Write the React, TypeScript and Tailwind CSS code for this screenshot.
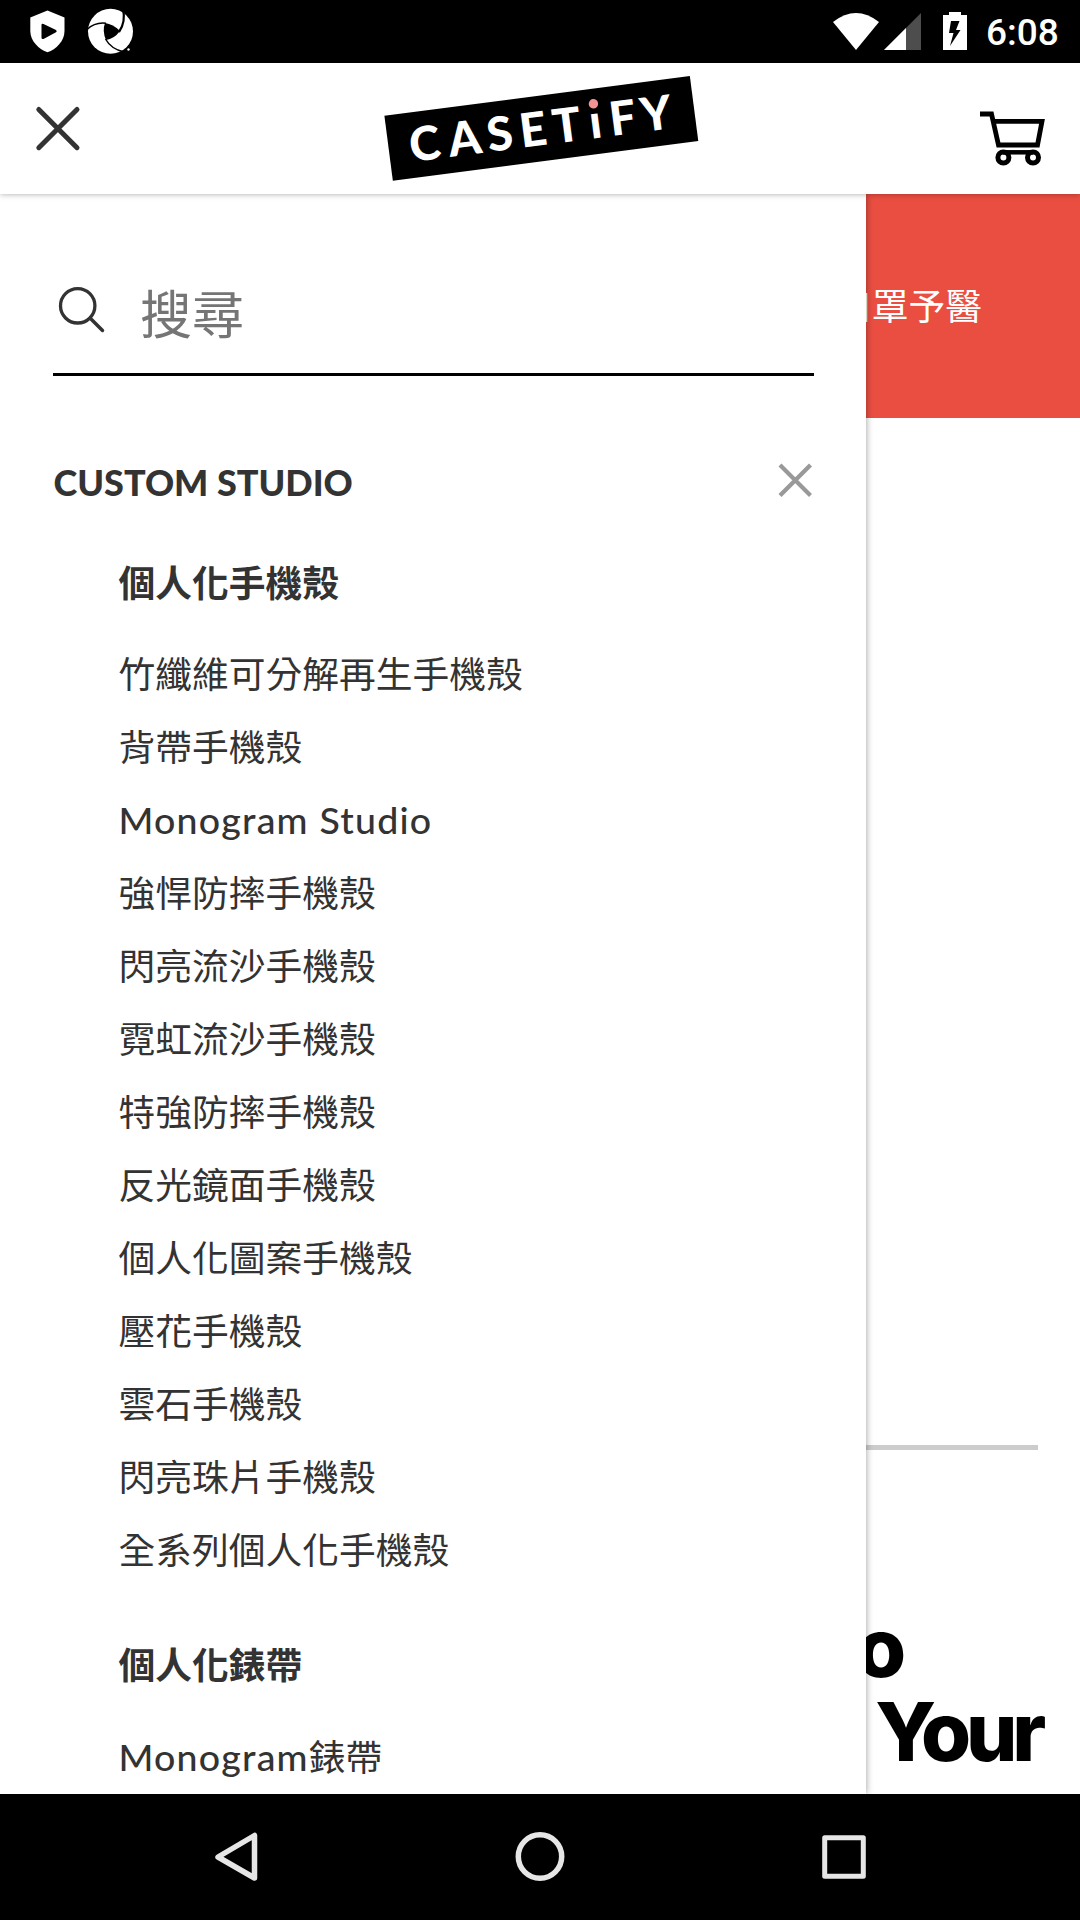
const cases = [
  '竹纖維可分解再生手機殼', '背帶手機殼', 'Monogram Studio', '強悍防摔手機殼', '閃亮流沙手機殼',
  '霓虹流沙手機殼', '特強防摔手機殼', '反光鏡面手機殼', '個人化圖案手機殼', '壓花手機殼',
  '雲石手機殼', '閃亮珠片手機殼', '全系列個人化手機殼',
];

function MenuLink({ label }: { label: string }) {
  const m = label.match(/^([A-Za-z ]*)(.*)$/)!;
  return (
    <li className="h-[73px] leading-[73px] whitespace-nowrap">
      {m[1] && <span className="text-[37.5px] font-medium tracking-[1.2px] font-['Lato',sans-serif]">{m[1]}</span>}
      {m[2]}
    </li>
  );
}

function StatusBar() {
  return (
    <div className="flex h-[63px] shrink-0 items-center bg-black text-white">
      <svg className="h-[63px] w-[160px]" viewBox="0 0 160 63" fill="#fff">
        <path d="M47.500 10.500 L64.500 17.500 V31 C64.500 41 56 49.500 47.500 52.300 C39 49.500 30.300 41 30.300 31 V17.500 Z" />
        <path d="M41.500 25 Q41.500 23 43.500 24 L56 30 Q57.500 31.300 56 32.300 L43.500 39 Q41.500 39.500 41.500 37.500 Z" fill="#000" />
        <circle cx="110.500" cy="31.300" r="22.500" />
        <path d="M105 23 Q113 24 120 31 Q114 39 106 40 Q102 31 105 23 Z" fill="#000" />
        <g fill="none" stroke="#000">
          <path d="M87 29.500 Q95 22 106 23.300" strokeWidth="1.500" />
          <path d="M123 9 Q126 22 119 32" strokeWidth="2.200" />
          <path d="M105.500 39 Q111 49 124 52" strokeWidth="1.500" />
        </g>
        <circle cx="128.500" cy="49.500" r="1.200" />
      </svg>
      <svg className="ml-auto h-[63px] w-[150px]" viewBox="820 0 150 63" fill="#fff">
        <path d="M833 22 Q856 4 879 22 L856 50 Z" />
        <path d="M884 50 L921 13 V50 Z" fill="#4d4d4d" />
        <path d="M884 50 L906 28 V50 Z" />
        <path d="M943 15 H949 V12 H961 V15 H967 V50 H943 Z" />
        <path d="M951 21 H959.500 L956 30 H960.500 L950 46 L953.500 33 H949 Z" fill="#000" />
      </svg>
      <span className="w-[110px] pt-[3px] pl-[16px] text-[37px] leading-[60px] font-medium font-['Roboto',sans-serif]">6:08</span>
    </div>
  );
}

function Logo() {
  return (
    <svg className="h-[131px] w-[360px]" viewBox="360 63 360 131">
      <g transform="translate(384.400 115.700) rotate(-7.400)">
        <rect width="308" height="65.500" fill="#000" />
        <text
          x="36.500 76.500 112 145.500 179.500 208.300 236 269.500"
          y="49.500"
          textAnchor="middle"
          fill="#fff"
          className="text-[47px] font-black font-['Lato',sans-serif]"
        >
          CASETiFY
        </text>
        <rect x="200" y="7" width="17" height="16.500" fill="#000" />
        <circle cx="208.800" cy="15.100" r="4.700" fill="#f49393" />
      </g>
    </svg>
  );
}

function Header() {
  return (
    <header className="relative z-20 flex h-[131px] shrink-0 items-center justify-between bg-white shadow-[0_0_6px_rgba(0,0,0,0.35)]">
      <svg className="h-[131px] w-[360px]" viewBox="0 63 360 131" stroke="#333" strokeWidth="5" strokeLinecap="round">
        <path d="M38.800 109.500 L77 147.700 M77 109.500 L38.800 147.700" />
      </svg>
      <Logo />
      <svg className="h-[131px] w-[360px]" viewBox="720 63 360 131" fill="none" stroke="#000">
        <path d="M980 114 H991.500 L998.500 145 H1037.500 L1042 121.300 H994" strokeWidth="4.800" />
        <path d="M1003 152.300 H1033" strokeWidth="4.500" />
        <circle cx="1003.400" cy="157.500" r="5.500" strokeWidth="5" />
        <circle cx="1033" cy="157.500" r="5.500" strokeWidth="5" />
      </svg>
    </header>
  );
}

function Drawer() {
  return (
    <aside className="z-10 h-[1600px] w-[866px] shrink-0 bg-white text-[#333] shadow-[0_0_7px_rgba(0,0,0,0.4)]">
      <div className="mr-[52px] ml-[53px] flex h-[182px] items-center border-b-[3px] border-black pt-[55px]">
        <svg className="h-[60px] w-[60px] shrink-0" viewBox="53 281 60 60" fill="none" stroke="#333" strokeLinecap="round">
          <circle cx="77.700" cy="305.800" r="17.200" strokeWidth="3.300" />
          <path d="M90.500 318.500 L102.500 330.500" strokeWidth="3.500" />
        </svg>
        <span className="ml-[27px] pt-[2px] text-[52px] leading-[60px] text-[#757575]">搜尋</span>
      </div>
      <div className="flex h-[208px] items-center justify-between pr-[53px] pl-[53.500px]">
        <h2 className="pt-[3px] text-[36px] font-black font-['Lato',sans-serif]">CUSTOM STUDIO</h2>
        <svg className="h-[36px] w-[36px]" viewBox="777 462 36 36" stroke="#999" strokeWidth="4.200">
          <path d="M780 465 L810.500 495.500 M810.500 465 L780 495.500" />
        </svg>
      </div>
      <section className="pl-[118.500px] text-[36.750px] text-[#333]">
        <h3 className="-mt-[3px] h-[55px] leading-[0] font-bold">個人化手機殼</h3>
        <ul>{cases.map((c) => <MenuLink key={c} label={c} />)}</ul>
        <h3 className="mt-[42px] h-[73px] leading-[73px] font-bold">個人化錶帶</h3>
        <ul className="mt-[19px]"><MenuLink label="Monogram錶帶" /></ul>
      </section>
    </aside>
  );
}

function Page() {
  return (
    <main className="-ml-[866px] flex w-[1080px] shrink-0 flex-col bg-white">
      <div className="flex h-[224px] items-center justify-end bg-[#ea4e41] pr-[98px] pb-[2px] text-[36.750px] text-white">捐贈口罩予醫</div>
      <hr className="mt-[1027px] ml-[42px] h-[5px] w-[996px] border-0 bg-[#ccc]" />
      <div className="mt-[156px] flex flex-col items-end text-[81px] leading-[84px] font-extrabold tracking-[-5.2px] [word-spacing:10px] text-black font-['Inter',sans-serif]">
        <span className="pr-[179px]">Studio</span>
        <span className="pr-[39px]">Design Your</span>
      </div>
    </main>
  );
}

function NavBar() {
  return (
    <nav className="relative z-30 flex h-[126px] shrink-0 bg-black">
      <svg className="h-[126px] w-[1080px]" viewBox="0 1794 1080 126" fill="none" stroke="#e6e6e6" strokeLinejoin="round">
        <path d="M218 1857 L254.500 1835.500 V1878 Z" strokeWidth="5.500" />
        <circle cx="540" cy="1856.500" r="21.700" strokeWidth="5.500" />
        <rect x="824.700" y="1837.700" width="38.600" height="38.600" strokeWidth="5" />
      </svg>
    </nav>
  );
}

export default function App() {
  return (
    <div lang="zh-Hant" className="flex h-[1920px] w-[1080px] flex-col overflow-hidden bg-white font-['Noto_Sans_CJK_TC',sans-serif]">
      <StatusBar />
      <Header />
      <div className="flex min-h-0 flex-1 overflow-hidden">
        <Drawer />
        <Page />
      </div>
      <NavBar />
    </div>
  );
}
